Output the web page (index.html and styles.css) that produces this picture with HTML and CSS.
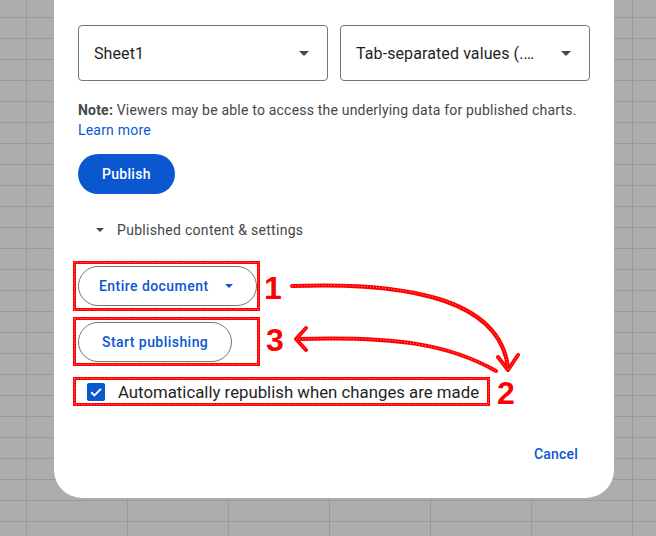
FILE: index.html
```html
<!DOCTYPE html>
<html lang="en">
<head>
<meta charset="utf-8">
<title>Publish to the web</title>
<link rel="stylesheet" href="styles.css">
</head>
<body>
<div class="dialog">
  <div class="selects">
    <div class="select"><span class="select-value">Sheet1</span><span class="caret"></span></div>
    <div class="select"><span class="select-value">Tab-separated values (.…</span><span class="caret"></span></div>
  </div>
  <p class="note"><b>Note:</b> Viewers may be able to access the underlying data for published charts. <a class="link">Learn more</a></p>
  <button class="btn-filled">Publish</button>
  <div class="section-toggle"><span class="tri"></span><span>Published content &amp; settings</span></div>
  <button class="btn-outlined btn-menu"><span>Entire document</span><span class="tri-blue"></span></button>
  <button class="btn-outlined btn-start">Start publishing</button>
  <label class="check-row">
    <span class="checkbox"><svg width="18" height="18" viewBox="0 0 18 18"><rect width="18" height="18" rx="2" fill="#0b57d0"/><path d="M4.2 9.3 L7.4 12.4 L13.9 5.9" fill="none" stroke="#fff" stroke-width="2"/></svg></span>
    <span>Automatically republish when changes are made</span>
  </label>
  <div class="actions"><button class="btn-text">Cancel</button></div>
</div>

<div class="annotations">
  <svg class="marks" width="656" height="536" viewBox="0 0 656 536">
    <g fill="none" stroke="#ff0000" stroke-width="3">
      <rect x="74.5" y="262.5" width="184" height="47"/>
      <rect x="74.5" y="318.5" width="184" height="46"/>
      <rect x="74.5" y="378.5" width="414" height="26"/>
    </g>
    <g fill="none" stroke="#ffffff" stroke-width="1" stroke-dasharray="1 2" opacity="0.55">
      <rect x="74.5" y="262.5" width="184" height="47"/>
      <rect x="74.5" y="318.5" width="184" height="46"/>
      <rect x="74.5" y="378.5" width="414" height="26"/>
    </g>
    <g fill="none" stroke="#ff0000" stroke-width="4" stroke-linecap="round" stroke-linejoin="round">
      <path d="M292 286 C 400 282, 500 296, 508 368"/>
      <path d="M498 357 L508 370 L518 355"/>
      <path d="M496 371 C 450 345, 400 336, 297 339"/>
      <path d="M306 328 L296 339 L306 350"/>
    </g>
    <g fill="none" stroke="#ffffff" stroke-width="1" stroke-dasharray="1 2" opacity="0.55">
      <path d="M292 286 C 400 282, 500 296, 508 368"/>
      <path d="M498 357 L508 370 L518 355"/>
      <path d="M496 371 C 450 345, 400 336, 297 339"/>
      <path d="M306 328 L296 339 L306 350"/>
    </g>
  </svg>
  <span class="num num-1">1</span>
  <span class="num num-3">3</span>
  <span class="num num-2">2</span>
</div>
</body>
</html>
```

FILE: styles.css
```css
* { box-sizing: border-box; }
html, body { margin: 0; height: 100%; }
body {
  background-color: #adadad;
  background-image:
    linear-gradient(to right, #9a9a9a 1px, transparent 1px),
    linear-gradient(to bottom, #9a9a9a 1px, transparent 1px);
  background-size: 101px 21px;
  background-position: 26px 17px;
  font-family: Roboto, "Liberation Sans", sans-serif;
  overflow: hidden;
}
.dialog {
  margin-left: 54px;
  width: 560px;
  background: #fff;
  border-radius: 0 0 28px 28px;
  padding: 25px 24px 24px;
}
.selects { display: flex; gap: 12px; }
.select {
  flex: 1;
  height: 56px;
  border: 1px solid #747775;
  border-radius: 4px;
  display: flex;
  align-items: center;
  justify-content: space-between;
  padding: 0 18px 0 15px;
  font-size: 16px;
  letter-spacing: 0.1px;
  color: #1f1f1f;
}
.caret {
  width: 0; height: 0;
  border-left: 5px solid transparent;
  border-right: 5px solid transparent;
  border-top: 5px solid #444746;
}
.note {
  margin: 19px 0 0;
  font-size: 14px;
  line-height: 20px;
  letter-spacing: 0.2px;
  color: #444746;
}
.note b { font-weight: 700; }
.link { color: #0b57d0; text-decoration: none; }
.btn-filled {
  display: block;
  margin-top: 14px;
  height: 40px;
  padding: 0 24px;
  border: 0;
  border-radius: 20px;
  background: #0b57d0;
  color: #fff;
  font: 500 14px Roboto, "Liberation Sans", sans-serif;
  letter-spacing: 0.3px;
}
.section-toggle {
  margin-top: 26px;
  display: flex;
  align-items: center;
  gap: 13px;
  height: 20px;
  padding-left: 18px;
  font-size: 14px;
  letter-spacing: 0.3px;
  color: #444746;
}
.tri {
  width: 0; height: 0;
  border-left: 4px solid transparent;
  border-right: 4px solid transparent;
  border-top: 4px solid #444746;
}
.btn-outlined {
  display: flex;
  align-items: center;
  height: 40px;
  padding: 0 23px;
  border: 1px solid #747775;
  border-radius: 20px;
  background: #fff;
  color: #0b57d0;
  font: 500 14px Roboto, "Liberation Sans", sans-serif;
  letter-spacing: 0.45px;
}
.btn-menu { margin-top: 26px; padding: 0 23px 0 20px; gap: 16px; }
.btn-start { margin-top: 16px; }
.tri-blue {
  width: 0; height: 0;
  border-left: 4px solid transparent;
  border-right: 4px solid transparent;
  border-top: 4px solid #0b57d0;
}
.check-row {
  margin-top: 18px;
  height: 24px;
  display: flex;
  align-items: center;
  gap: 13px;
  padding-left: 9px;
  font-size: 16.8px;
  color: #1f1f1f;
}
.checkbox { width: 18px; height: 18px; display: block; }
.checkbox svg { display: block; }
.actions { margin-top: 30px; display: flex; justify-content: flex-end; }
.btn-text {
  height: 40px;
  padding: 0 12px;
  border: 0;
  background: transparent;
  color: #0b57d0;
  font: 500 14px Roboto, "Liberation Sans", sans-serif;
  letter-spacing: 0.2px;
}
.annotations {
  position: absolute;
  left: 0; top: 0;
  width: 656px; height: 536px;
  pointer-events: none;
}
.marks { position: absolute; left: 0; top: 0; }
.num {
  position: absolute;
  font: 700 32px/32px "Liberation Sans", Arial, sans-serif;
  color: #ff0000;
}
.num-1 { left: 264px; top: 272px; }
.num-3 { left: 266px; top: 324px; }
.num-2 { left: 497px; top: 377px; }
```
